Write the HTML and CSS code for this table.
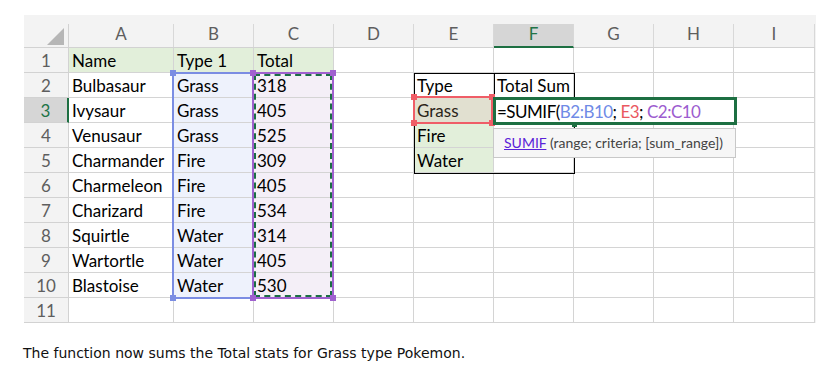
FILE: index.html
```html
<!DOCTYPE html>
<html>
<head>
<meta charset="utf-8">
<link rel="stylesheet" href="styles.css">
</head>
<body>
<div class="sheet">
  <div class="h corner"><span><i class="tri"></i></span></div>
  <div class="h"><span>A</span></div>
  <div class="h"><span>B</span></div>
  <div class="h"><span>C</span></div>
  <div class="h"><span>D</span></div>
  <div class="h"><span>E</span></div>
  <div class="h sel"><span>F</span></div>
  <div class="h"><span>G</span></div>
  <div class="h"><span>H</span></div>
  <div class="h"><span>I</span></div>

  <div class="rh">1</div><div class="c g">Name</div><div class="c g">Type 1</div><div class="c g">Total</div><div class="c"></div><div class="c"></div><div class="c"></div><div class="c"></div><div class="c"></div><div class="c"></div>
  <div class="rh">2</div><div class="c">Bulbasaur</div><div class="c b">Grass</div><div class="c p">318</div><div class="c"></div><div class="c">Type</div><div class="c">Total Sum</div><div class="c"></div><div class="c"></div><div class="c"></div>
  <div class="rh cur">3</div><div class="c">Ivysaur</div><div class="c b">Grass</div><div class="c p">405</div><div class="c"></div><div class="c e3">Grass</div><div class="c"></div><div class="c"></div><div class="c"></div><div class="c"></div>
  <div class="rh">4</div><div class="c">Venusaur</div><div class="c b">Grass</div><div class="c p">525</div><div class="c"></div><div class="c g">Fire</div><div class="c"></div><div class="c"></div><div class="c"></div><div class="c"></div>
  <div class="rh">5</div><div class="c">Charmander</div><div class="c b">Fire</div><div class="c p">309</div><div class="c"></div><div class="c g">Water</div><div class="c"></div><div class="c"></div><div class="c"></div><div class="c"></div>
  <div class="rh">6</div><div class="c">Charmeleon</div><div class="c b">Fire</div><div class="c p">405</div><div class="c"></div><div class="c"></div><div class="c"></div><div class="c"></div><div class="c"></div><div class="c"></div>
  <div class="rh">7</div><div class="c">Charizard</div><div class="c b">Fire</div><div class="c p">534</div><div class="c"></div><div class="c"></div><div class="c"></div><div class="c"></div><div class="c"></div><div class="c"></div>
  <div class="rh">8</div><div class="c">Squirtle</div><div class="c b">Water</div><div class="c p">314</div><div class="c"></div><div class="c"></div><div class="c"></div><div class="c"></div><div class="c"></div><div class="c"></div>
  <div class="rh">9</div><div class="c">Wartortle</div><div class="c b">Water</div><div class="c p">405</div><div class="c"></div><div class="c"></div><div class="c"></div><div class="c"></div><div class="c"></div><div class="c"></div>
  <div class="rh">10</div><div class="c">Blastoise</div><div class="c b">Water</div><div class="c p">530</div><div class="c"></div><div class="c"></div><div class="c"></div><div class="c"></div><div class="c"></div><div class="c"></div>
  <div class="rh">11</div><div class="c"></div><div class="c"></div><div class="c"></div><div class="c"></div><div class="c"></div><div class="c"></div><div class="c"></div><div class="c"></div><div class="c"></div>

  <div class="tbl"><i class="tbl-div"></i></div>

  <div class="rng rng-b">
    <i class="sq tl"></i><i class="sq bl"></i>
  </div>
  <div class="rng rng-c">
    <div class="ants"></div>
    <i class="sq tl"></i><i class="sq tr"></i><i class="sq bl"></i><i class="sq br"></i>
  </div>
  <div class="rng rng-e">
    <i class="sq tl"></i><i class="sq tr"></i><i class="sq bl"></i><i class="sq br"></i>
  </div>

  <div class="edit">=SUMIF(<span class="rb">B2:B10</span>; <span class="re">E3</span>; <span class="rp">C2:C10</span></div>
  <i class="handle"></i>
  <div class="tip"><span class="fn">SUMIF</span> (range; criteria; [sum_range])</div>
</div>
<p class="note">The function now sums the Total stats for Grass type Pokemon.</p>
</body>
</html>
```

FILE: styles.css
```css
body {
  margin: 0;
  background: #fff;
}

.sheet {
  position: relative;
  margin: 15px 0 0 24px;
  width: 792px;
  display: grid;
  grid-template-columns: 45px 105px repeat(7, 80px) 81px;
  grid-template-rows: 33px repeat(11, 25px);
  background: #f3f3f3;
  font-family: Lato, "Open Sans", sans-serif;
  font-size: 17px;
  color: #000;
}

.h {
  display: flex;
  flex-direction: column;
  justify-content: flex-end;
  background: #f3f3f3;
  border-bottom: 1px solid #d2d2d2;
}

.h span {
  display: block;
  height: 23px;
  line-height: 19px;
  text-align: center;
  color: #5e5e5e;
  border-right: 1px solid #d8d8d8;
  position: relative;
}

.h.sel span {
  background: #d6d6d6;
  color: #217346;
  border-bottom: 2px solid #1d6f42;
  height: 22px;
  margin-bottom: -1px;
}

.corner span {
  border-right: 1px solid #d2d2d2;
}

.tri {
  position: absolute;
  right: 4px;
  bottom: 2px;
  width: 0;
  height: 0;
  border-style: solid;
  border-width: 0 0 17px 17px;
  border-color: transparent transparent #b6b6b6 transparent;
}

.rh {
  background: #f3f3f3;
  border-right: 1px solid #d2d2d2;
  border-bottom: 1px solid #d2d2d2;
  text-align: center;
  line-height: 26px;
  color: #5e5e5e;
  overflow: hidden;
}

.rh.cur {
  background: #d6d6d6;
  color: #217346;
  border-right: 2px solid #1d6f42;
}

.c {
  background: #fff;
  border-right: 1px solid #d4d4d4;
  border-bottom: 1px solid #d4d4d4;
  padding-left: 3px;
  line-height: 26px;
  white-space: nowrap;
  overflow: hidden;
}

.c.g { background: #e2efda; }
.c.b { background: #eef2fc; }
.c.p { background: #f4eff7; }
.c.e3 { background: #e1e0d0; color: #2b2418; }

.tbl {
  position: absolute;
  left: 390px;
  top: 58px;
  width: 161px;
  height: 101px;
  border: 1px solid #000;
  box-sizing: border-box;
}

.tbl-div {
  position: absolute;
  left: 79px;
  top: 0;
  width: 1px;
  height: 25px;
  background: #000;
}

.rng {
  position: absolute;
  box-sizing: border-box;
}

.rng-b {
  left: 148px;
  top: 57px;
  width: 82px;
  height: 227px;
  border: 2px solid #7b8de3;
}

.rng-c {
  left: 228px;
  top: 57px;
  width: 82px;
  height: 227px;
  border: 2px solid #a061cf;
}

.ants {
  position: absolute;
  inset: 0;
  border: 2px dashed #1b6e44;
}

.rng-e {
  left: 389px;
  top: 81px;
  width: 80px;
  height: 28px;
  border: 2px solid #ef5d67;
}

.sq {
  position: absolute;
  width: 6px;
  height: 6px;
}

.rng-b .sq { background: #7b8de3; }
.rng-c .sq { background: #a061cf; }
.rng-e .sq { background: #ef5d67; }

.sq.tl { left: -4px; top: -4px; }
.sq.tr { right: -4px; top: -4px; }
.sq.bl { left: -4px; bottom: -4px; }
.sq.br { right: -4px; bottom: -4px; }

.edit {
  position: absolute;
  left: 469px;
  top: 82px;
  width: 244px;
  height: 28px;
  box-sizing: border-box;
  border: 3px solid #1d6f42;
  background: #fff;
  padding-left: 1px;
  line-height: 23px;
  letter-spacing: -0.5px;
  white-space: nowrap;
}

.rb { color: #6f8ae6; }
.re { color: #ea5860; }
.rp { color: #9c5ccf; }

.handle {
  position: absolute;
  left: 548px;
  top: 108px;
  width: 5px;
  height: 4px;
  background: #1d6f42;
}

.tip {
  position: absolute;
  left: 469px;
  top: 113px;
  width: 243px;
  height: 30px;
  box-sizing: border-box;
  background: #f6f6f6;
  border: 1px solid #c8c8c8;
  padding-left: 10px;
  font-size: 14px;
  line-height: 28px;
  color: #444;
  white-space: nowrap;
}

.fn {
  color: #5a22d8;
  text-decoration: underline;
}

.note {
  margin: 22px 0 0 23px;
  font-family: "DejaVu Sans", Verdana, sans-serif;
  font-size: 14px;
  line-height: 16px;
  color: #111;
}
```
